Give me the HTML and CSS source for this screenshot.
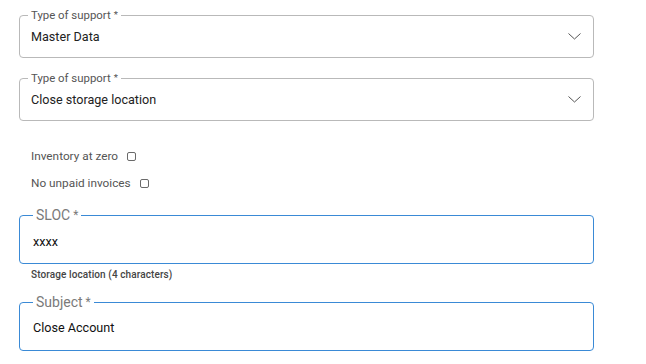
FILE: index.html
```
<!DOCTYPE html>
<html lang="en">
<head>
<meta charset="utf-8">
<title>Support form</title>
<link rel="stylesheet" href="styles.css">
</head>
<body>
<form class="form">
  <fieldset class="field select first">
    <legend class="legend small">Type of support<span class="req">*</span></legend>
    <div class="row">
      <span class="value">Master Data</span>
      <svg class="chev" width="13" height="7" viewBox="0 0 13 7"><path d="M0.5 0.5 L6.5 6 L12.5 0.5" fill="none" stroke="#555" stroke-width="1"/></svg>
    </div>
  </fieldset>
  <fieldset class="field select second">
    <legend class="legend small">Type of support<span class="req">*</span></legend>
    <div class="row">
      <span class="value">Close storage location</span>
      <svg class="chev" width="13" height="7" viewBox="0 0 13 7"><path d="M0.5 0.5 L6.5 6 L12.5 0.5" fill="none" stroke="#555" stroke-width="1"/></svg>
    </div>
  </fieldset>
  <div class="checks">
    <label class="check">Inventory at zero<input type="checkbox" class="box"></label>
    <label class="check">No unpaid invoices<input type="checkbox" class="box"></label>
  </div>
  <fieldset class="field input sloc">
    <legend class="legend big">SLOC<span class="req">*</span></legend>
    <div class="value">xxxx</div>
  </fieldset>
  <div class="helper">Storage location (4 characters)</div>
  <fieldset class="field input subject">
    <legend class="legend big">Subject<span class="req">*</span></legend>
    <div class="value">Close Account</div>
  </fieldset>
</form>
</body>
</html>
```
FILE: styles.css
```
* { box-sizing: border-box; }
html, body { margin: 0; padding: 0; background: #fff; }
body { font-family: Roboto, "Liberation Sans", Arial, sans-serif; color: #222; }
.form {
  width: 594px;
  padding: 8px 0 0 19px;
  display: flex;
  flex-direction: column;
}
.field {
  margin: 0;
  min-width: 0;
  width: 575px;
  border-radius: 4px;
}
.select {
  border: 1px solid #b9b9b9;
  padding: 7px 12px 12px 11px;
}
.second { margin-top: 13px; }
.legend.small {
  font-size: 11.4px;
  line-height: 14px;
  color: #555;
  padding: 0 3px;
  margin-left: -3px;
}
.legend.big {
  font-size: 14px;
  line-height: 18px;
  color: #7a7a7a;
  padding: 0 3px;
}
.req { font-size: 0.85em; margin-left: 3px; vertical-align: 1px; }
.row {
  display: flex;
  align-items: center;
  justify-content: space-between;
  height: 16px;
}
.select .value { font-size: 12.6px; line-height: 16px; color: #222; }
.chev { display: block; margin-top: -2px; }
.checks {
  margin-top: 27px;
  padding-left: 12px;
  display: flex;
  flex-direction: column;
  gap: 11px;
}
.check {
  display: flex;
  align-items: center;
  font-size: 11.8px;
  line-height: 16px;
  color: #555;
}
.box {
  appearance: none;
  -webkit-appearance: none;
  width: 9px;
  height: 9px;
  margin: 1px 0 0 9px;
  border: 1px solid #6a6a6a;
  border-radius: 2px;
  background: #fff;
}
.input {
  border: 1px solid #3a8ad6;
  padding: 9px 13px 12px 13px;
}
.sloc { margin-top: 15px; }
.input .value { font-size: 12.6px; line-height: 18px; color: #111; }
.subject { margin-top: 12px; padding-top: 8px; padding-bottom: 13px; }
.helper {
  margin-top: 5px;
  padding-left: 12px;
  font-size: 10px;
  line-height: 12px;
  font-weight: 500;
  color: #444;
  letter-spacing: 0.1px;
}
```
